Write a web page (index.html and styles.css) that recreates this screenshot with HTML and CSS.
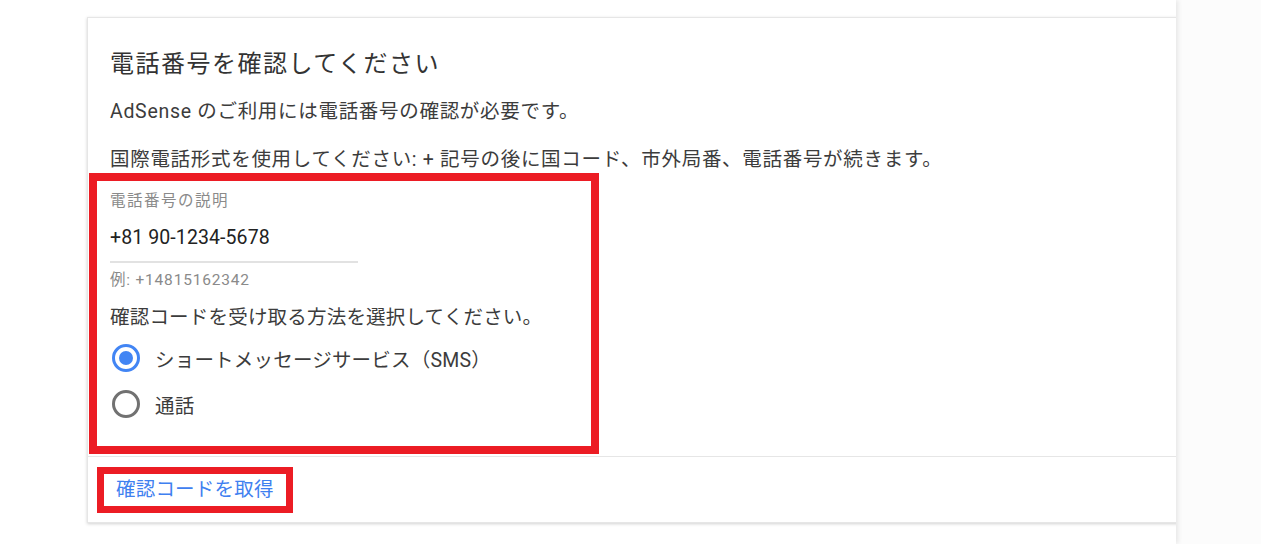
FILE: index.html
```html
<!DOCTYPE html>
<html lang="ja">
<head>
  <meta charset="UTF-8">
  <meta name="viewport" content="width=device-width, initial-scale=1.0">
  <title>電話番号を確認してください</title>
  <link rel="stylesheet" href="styles.css">
</head>
<body>
  <div class="page">
    <div class="card">
      <div class="card-body">
        <h1>電話番号を確認してください</h1>
        <p class="text first">AdSense のご利用には電話番号の確認が必要です。</p>
        <p class="text">国際電話形式を使用してください: + 記号の後に国コード、市外局番、電話番号が続きます。</p>

        <div class="highlight">
          <div class="field-label">電話番号の説明</div>
          <div class="field-input">+81 90-1234-5678</div>
          <div class="field-hint">例: +14815162342</div>

          <div class="question">確認コードを受け取る方法を選択してください。</div>
          <div class="radios">
            <label class="radio checked">
              <span class="circle"></span>
              <span>ショートメッセージサービス（SMS）</span>
            </label>
            <label class="radio">
              <span class="circle"></span>
              <span>通話</span>
            </label>
          </div>
        </div>
      </div>

      <div class="card-footer">
        <div class="highlight small">
          <a class="link">確認コードを取得</a>
        </div>
      </div>
    </div>
  </div>
</body>
</html>
```

FILE: styles.css
```css
* {
  box-sizing: border-box;
  margin: 0;
  padding: 0;
}
body {
  font-family: Roboto, 'Noto Sans CJK JP', sans-serif;
  background: #fcfcfc;
  color: #3c3c3c;
  height: 100vh;
  overflow: hidden;
}
.page {
  width: 1176px;
  height: 100%;
  background: #fff;
  overflow: hidden;
  padding-top: 17px;
  padding-left: 87px;
  box-shadow: 2px 0 5px rgba(0, 0, 0, 0.09);
  position: relative;
}
.card {
  width: 1200px;
  background: #fff;
  border: 1px solid #e6e6e6;
  box-shadow: 0 1px 3px rgba(0, 0, 0, 0.18);
}
.card-body {
  padding: 30px 22px 0;
}
h1 {
  font-size: 24px;
  font-weight: 400;
  line-height: 32px;
  letter-spacing: 1.5px;
  color: #333;
}
.text {
  font-size: 19.5px;
  line-height: 28px;
  letter-spacing: 0.7px;
  color: #3c3c3c;
  margin-top: 20px;
}
.text.first {
  margin-top: 18px;
}
/* 赤枠 */
.highlight {
  border: 8px solid #ec1c24;
  margin: -1px 0 0 -21px;
  padding: 10px 0 26px 13px;
  width: 510px;
}
.field-label {
  font-size: 15.5px;
  line-height: 20px;
  letter-spacing: 1.5px;
  color: #8a8a8a;
}
.field-input {
  width: 248px;
  margin-top: 13px;
  padding-bottom: 9px;
  font-size: 19.5px;
  line-height: 28px;
  letter-spacing: 0.1px;
  color: #222;
  border-bottom: 2px solid #e2e2e2;
}
.field-hint {
  margin-top: 7px;
  font-size: 15.5px;
  line-height: 20px;
  letter-spacing: 0.8px;
  color: #8a8a8a;
}
.question {
  margin-top: 14px;
  font-size: 19.5px;
  line-height: 28px;
  letter-spacing: 0.2px;
  color: #3c3c3c;
}
.radios {
  margin-top: 10px;
  display: flex;
  flex-direction: column;
  gap: 14px;
}
.radio {
  display: flex;
  align-items: center;
  gap: 15px;
  height: 32px;
  font-size: 19.5px;
  letter-spacing: 0.2px;
  color: #3c3c3c;
}
.circle {
  width: 28px;
  height: 28px;
  border-radius: 50%;
  border: 3px solid #717171;
  margin-left: 2px;
  display: flex;
  align-items: center;
  justify-content: center;
}
.radio.checked .circle {
  border-color: #4285f4;
}
.radio.checked .circle::after {
  content: '';
  width: 14px;
  height: 14px;
  border-radius: 50%;
  background: #4285f4;
}
.card-footer {
  margin-top: 2px;
  border-top: 1px solid #e6e6e6;
  padding: 10px 22px 9px;
}
.highlight.small {
  display: inline-block;
  width: auto;
  border-width: 7px;
  margin: 0 0 0 -13px;
  padding: 0 12px;
}
.link {
  display: block;
  font-size: 19.5px;
  line-height: 32px;
  letter-spacing: 0.2px;
  color: #3f80f0;
  cursor: pointer;
}
```
